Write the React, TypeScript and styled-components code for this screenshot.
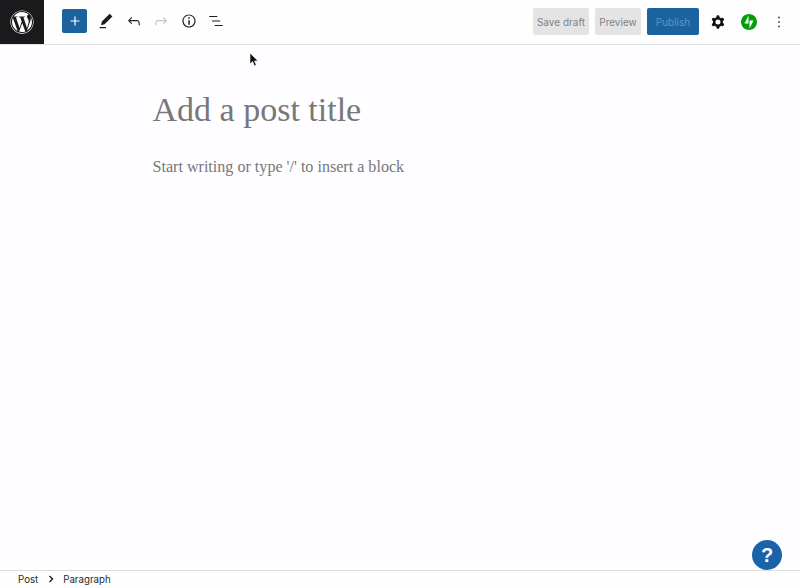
import React from "react";
import styled, { createGlobalStyle } from "styled-components";

const Global = createGlobalStyle`
  html, body { margin: 0; padding: 0; height: 100%; background: #fefdff; }
  #root { height: 100%; }
`;

const Page = styled.div`
  position: relative;
  width: 800px;
  height: 587px;
  overflow: hidden;
  display: flex;
  flex-direction: column;
  background: #fefdff;
  font-family: "Inter", "Liberation Sans", sans-serif;
`;

const Header = styled.header`
  height: 44px;
  flex: none;
  display: flex;
  align-items: center;
  background: #fefefe;
  border-bottom: 1px solid #e2e2e4;
`;

const LogoBox = styled.div`
  width: 44px;
  height: 44px;
  flex: none;
  display: flex;
  align-items: center;
  justify-content: center;
  background: #1a191b;
`;

const LeftTools = styled.div`
  display: flex;
  align-items: center;
  margin: 0 0 2px 18px;
`;

const Inserter = styled.div`
  width: 25px;
  height: 24px;
  border-radius: 2px;
  background: #1a639f;
  display: flex;
  align-items: center;
  justify-content: center;
  margin-right: 5.5px;
`;

const ToolSlot = styled.div`
  width: 27.5px;
  height: 24px;
  display: flex;
  align-items: center;
  justify-content: center;
`;

const RightTools = styled.div`
  margin: 0 9px 1px auto;
  display: flex;
  align-items: center;
`;

const TextButton = styled.div<{ $primary?: boolean; $w: number; $gap: number }>`
  width: ${(p) => p.$w}px;
  height: 27px;
  margin-right: ${(p) => p.$gap}px;
  border-radius: 2px;
  display: flex;
  align-items: center;
  justify-content: center;
  font-size: 10px;
  background: ${(p) => (p.$primary ? "#1a639f" : "#e4e4e5")};
  color: ${(p) => (p.$primary ? "#5f93bf" : "#828284")};
`;

const IconSlot = styled.div<{ $w: number }>`
  width: ${(p) => p.$w}px;
  height: 24px;
  display: flex;
  align-items: center;
  justify-content: center;
`;

const Main = styled.main`
  flex: 1;
  padding: 44px 0 0 152.5px;
`;

const Title = styled.h1`
  margin: 0;
  font-family: "Liberation Serif", serif;
  font-weight: 400;
  font-size: 34px;
  line-height: 42px;
  color: #77777a;
  white-space: nowrap;
`;

const Prompt = styled.p`
  margin: 24px 0 0;
  font-family: "Liberation Serif", serif;
  font-size: 16.1px;
  line-height: 24px;
  color: #77777a;
  white-space: nowrap;
`;

const Footer = styled.footer`
  height: 16px;
  flex: none;
  display: flex;
  align-items: center;
  padding-left: 18px;
  border-top: 1px solid #dcdcde;
  background: #fefefe;
  font-size: 9.7px;
  color: #2a2a2c;
`;

const Crumb = styled.span``;

const Separator = styled.svg`
  margin: 0 9px 0 10px;
`;

const Help = styled.div`
  position: absolute;
  left: 752px;
  top: 540px;
  width: 30px;
  height: 30px;
  border-radius: 50%;
  background: #1a63a8;
  color: #fff;
  font: 700 20px/30px "Liberation Sans", sans-serif;
  text-align: center;
`;

const Pointer = styled.svg`
  position: absolute;
  left: 249px;
  top: 52px;
`;

const Icon = ({ d, fill = "#1e1e1e", size = 24 }: { d: string; fill?: string; size?: number }) => (
  <svg width={size} height={size} viewBox="0 0 24 24" fill={fill}>
    <path d={d} fillRule="evenodd" />
  </svg>
);

const paths = {
  plus: "M18 11.2h-5.2V6h-1.6v5.2H6v1.6h5.2V18h1.6v-5.2H18z",
  pencil: "m19 7-3-3-8.5 8.5-1 4 4-1L19 7zm-7 11.5H5V20h7v-1.5z",
  undo: "M18.3 11.7c-.6-.6-1.4-.9-2.3-.9H6.7l2.9-3.3-1.1-1-4.5 5L8.5 16l1-1-2.7-2.7H16c.5 0 .9.2 1.3.5 1 1 1 3.4 1 4.5v.3h1.5v-.2c0-1.5 0-4.3-1.5-5.7z",
  redo: "M15.6 6.5l-1.1 1 2.9 3.3H8c-.9 0-1.7.3-2.3.9-1.4 1.5-1.4 4.2-1.4 5.6v.2h1.5v-.3c0-1.1 0-3.5 1-4.5.3-.3.7-.5 1.3-.5h9.2L14.5 15l1.1 1.1 4.6-4.6-4.6-5z",
  info: "M12 3.2c-4.8 0-8.8 3.9-8.8 8.8 0 4.8 3.9 8.8 8.8 8.8 4.8 0 8.8-3.9 8.8-8.8 0-4.8-4-8.8-8.8-8.8zm0 16c-4 0-7.2-3.3-7.2-7.2C4.8 8 8 4.8 12 4.8s7.2 3.3 7.2 7.2c0 4-3.2 7.2-7.2 7.2zM11 17h2v-6h-2v6zm0-8h2V7h-2v2z",
  list: "M13.8 5.2H3v1.5h10.8V5.2zm-3.6 12v1.5H21v-1.5H10.2zm7.2-6H6.6v1.5h10.8v-1.5z",
  cog: "M10.289 4.836A1 1 0 0111.275 4h1.306a1 1 0 01.987.836l.244 1.466c.787.26 1.503.679 2.108 1.218l1.393-.522a1 1 0 011.216.437l.653 1.13a1 1 0 01-.23 1.273l-1.148.944a6.025 6.025 0 010 2.435l1.149.946a1 1 0 01.23 1.272l-.653 1.13a1 1 0 01-1.216.437l-1.394-.522c-.605.54-1.32.958-2.108 1.218l-.244 1.466a1 1 0 01-.987.836h-1.306a1 1 0 01-.986-.836l-.244-1.466a5.995 5.995 0 01-2.108-1.218l-1.394.522a1 1 0 01-1.217-.436l-.653-1.131a1 1 0 01.23-1.272l1.149-.946a6.026 6.026 0 010-2.435l-1.148-.944a1 1 0 01-.23-1.272l.653-1.131a1 1 0 011.217-.437l1.393.522a5.994 5.994 0 012.108-1.218l.244-1.466zM14.929 12a3 3 0 11-6 0 3 3 0 016 0z",
  more: "M13 19h-2v-2h2v2zm0-6h-2v-2h2v2zm0-6h-2V5h2v2z",
};

const WpLogo = () => (
  <svg width="24" height="24" viewBox="0 0 512 512" fill="#fff">
    <path d="M61.7 169.4l101.5 278C92.2 413 43.3 340.2 43.3 256c0-30.9 6.6-60.1 18.4-86.6zm337.9 75.9c0-26.3-9.4-44.5-17.5-58.7-10.8-17.5-20.9-32.4-20.9-49.9 0-19.6 14.8-37.8 35.7-37.8.9 0 1.8.1 2.8.2-37.9-34.7-88.3-55.9-143.7-55.9-74.3 0-139.7 38.1-177.8 95.9 5 .2 9.7.3 13.7.3 22.2 0 56.7-2.7 56.7-2.7 11.5-.7 12.8 16.2 1.4 17.5 0 0-11.5 1.3-24.3 2l77.5 230.4L249.8 247l-33.1-90.8c-11.5-.7-22.3-2-22.3-2-11.5-.7-10.1-18.2 1.3-17.5 0 0 35.1 2.7 56 2.7 22.2 0 56.7-2.7 56.7-2.7 11.5-.7 12.8 16.2 1.4 17.5 0 0-11.5 1.3-24.3 2l76.9 228.7 21.2-70.9c9-29.4 16-50.5 16-68.7zm-139.9 29.4l-63.8 185.5c19.1 5.6 39.2 8.7 60.1 8.7 24.8 0 48.5-4.3 70.6-12.1-.6-.9-1.1-1.9-1.5-2.9l-65.4-179.2zm183-120.7c.9 6.8 1.4 14 1.4 21.9 0 21.6-4 45.8-16.2 76.2l-65 187.9C426.2 403 468.7 334.5 468.7 256c0-37-9.4-71.8-26-102zM504 256c0 136.8-111.3 248-248 248C119.2 504 8 392.7 8 256 8 119.2 119.2 8 256 8c136.7 0 248 111.2 248 248zm-11.4 0c0-130.5-106.2-236.6-236.6-236.6C125.5 19.4 19.4 125.5 19.4 256S125.6 492.6 256 492.6c130.5 0 236.6-106.1 236.6-236.6z" />
  </svg>
);

const Jetpack = () => (
  <svg width="16" height="16" viewBox="0 0 32 32">
    <path fill="#069e08" fillRule="evenodd" d="M16 0C7.2 0 0 7.2 0 16s7.2 16 16 16 16-7.2 16-16S24.8 0 16 0z" />
    <path fill="#fff" d="M15 19H7l8-16v16zM17 29V13h8l-8 16z" />
  </svg>
);

export default function App() {
  return (
    <Page>
      <Global />
      <Header>
        <LogoBox>
          <WpLogo />
        </LogoBox>
        <LeftTools>
          <Inserter>
            <Icon d={paths.plus} fill="#fff" size={18} />
          </Inserter>
          <ToolSlot>
            <Icon d={paths.pencil} size={22} />
          </ToolSlot>
          <ToolSlot>
            <Icon d={paths.undo} size={18} />
          </ToolSlot>
          <ToolSlot>
            <Icon d={paths.redo} fill="#c4c4c6" size={18} />
          </ToolSlot>
          <ToolSlot>
            <Icon d={paths.info} size={18} />
          </ToolSlot>
          <ToolSlot>
            <Icon d={paths.list} size={18} />
          </ToolSlot>
        </LeftTools>
        <RightTools>
          <TextButton $w={56} $gap={6}>Save draft</TextButton>
          <TextButton $w={46} $gap={6}>Preview</TextButton>
          <TextButton $primary $w={52} $gap={6}>Publish</TextButton>
          <IconSlot $w={26}>
            <Icon d={paths.cog} fill="#111" size={20} />
          </IconSlot>
          <IconSlot $w={36}>
            <Jetpack />
          </IconSlot>
          <IconSlot $w={24}>
            <Icon d={paths.more} size={18} />
          </IconSlot>
        </RightTools>
      </Header>
      <Main>
        <Title>Add a post title</Title>
        <Prompt>Start writing or type '/' to insert a block</Prompt>
      </Main>
      <Footer>
        <Crumb>Post</Crumb>
        <Separator width="6" height="8" viewBox="0 0 6 8" fill="none" stroke="#1e1e1e" strokeWidth="1.4">
          <path d="M1.5 1l3 3-3 3" />
        </Separator>
        <Crumb>Paragraph</Crumb>
      </Footer>
      <Help>?</Help>
      <Pointer width="10" height="15" viewBox="0 0 10 15">
        <path d="M1 1v11l2.6-2.4 1.8 4.2 1.9-.8-1.8-4.1H9z" fill="#111" stroke="#fff" strokeWidth=".6" />
      </Pointer>
    </Page>
  );
}
